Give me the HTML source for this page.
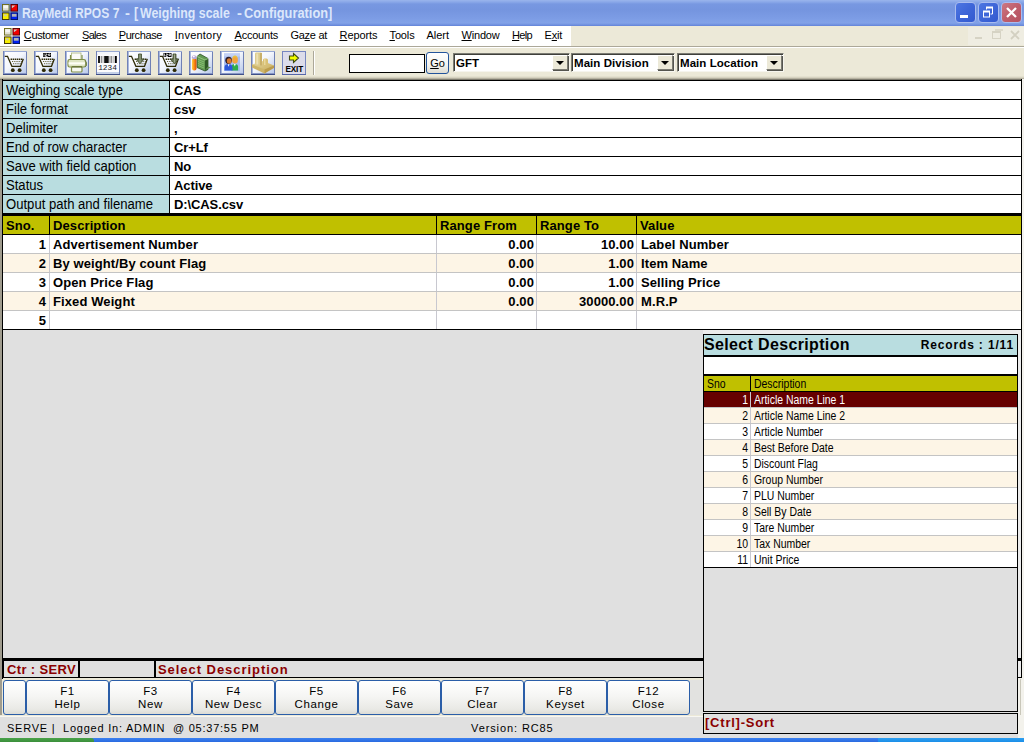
<!DOCTYPE html>
<html>
<head>
<meta charset="utf-8">
<title>RayMedi RPOS 7 - [Weighing scale - Configuration]</title>
<style>
*{box-sizing:border-box;margin:0;padding:0}
html,body{width:1024px;height:742px;overflow:hidden;background:#ECE9D8;font-family:"Liberation Sans",sans-serif;color:#000}
.a{position:absolute}
#root{position:relative;width:1024px;height:742px;overflow:hidden;background:#ECE9D8}
#title{left:0;top:0;width:1024px;height:26px;background:linear-gradient(to bottom,#9ab5ec 0px,#8aa8e8 2px,#7898e1 4px,#7595df 10px,#7b9be4 17px,#82a2e8 23px,#6f8fde 25px,#6182d8 26px)}
#title .tt{top:5px;font-size:14px;line-height:16px;font-weight:bold;color:#dce7fb;white-space:nowrap;transform-origin:0 0}
#title .txt{left:22px;top:6px;font-size:13px;line-height:15px;font-weight:bold;color:#dce7fb;letter-spacing:-.12px;white-space:nowrap}
.wb{top:2px;width:21px;height:21px;border-radius:4px;border:1px solid #a9bcef}
.mi{top:29px;font-size:11px;line-height:13px;white-space:nowrap}
.mi u{text-decoration:underline;text-underline-offset:1px}
.lab{left:3px;width:166px;height:18px;background:#b9dde0;font-size:14px;padding-left:3px;line-height:19px;white-space:nowrap;overflow:hidden}
.sx{display:inline-block;transform-origin:0 50%;white-space:nowrap}
.val{left:170px;width:851px;height:18px;background:#fff;font-size:13px;font-weight:bold;padding-left:4px;line-height:19px;white-space:nowrap;overflow:hidden;letter-spacing:-.1px}
.k{background:#000}
.gh{top:216px;height:18px;background:#c0c000;font-size:13px;font-weight:bold;line-height:20px;padding-left:3px;overflow:hidden;white-space:nowrap;letter-spacing:.1px}
.gr{left:3px;width:1018px;height:18px}
.gc{height:18px;top:0;font-size:13px;font-weight:bold;line-height:19px;white-space:nowrap;letter-spacing:.1px}
.lr{left:704px;width:313px;height:15px}
.lc{top:1px;height:15px;font-size:12px;line-height:15px;white-space:nowrap;transform-origin:0 0}
.fk{top:680px;height:35px;border:1px solid #2b5ea8;border-radius:3px;background:linear-gradient(to bottom,#ffffff 0%,#f6f6f4 45%,#e9e9e5 85%,#dcdcd6 100%);font-size:11.5px;text-align:center;line-height:13px;padding-top:4px;letter-spacing:.6px;white-space:nowrap}
.cb{top:53px;height:19px;background:#fff;border:1px solid;border-color:#7b7b73 #f6f5ee #f6f5ee #7b7b73;box-shadow:inset 1px 1px 0 #3f3f3a}
.cb .t{left:2px;top:3px;font-size:11.5px;line-height:13px;font-weight:bold;white-space:nowrap;letter-spacing:.05px}
.cb .d{right:1px;top:1px;width:16px;height:15px;background:#ECE9D8;border:1px solid;border-color:#fff #7b7b73 #7b7b73 #fff;box-shadow:1px 1px 0 #55554f}
.cb .d i{position:absolute;left:3px;top:5px;width:0;height:0;border-left:4px solid transparent;border-right:4px solid transparent;border-top:4px solid #000}
</style>
</head>
<body>
<div id="root">

<div id="title" class="a">
<svg class="a" style="left:2px;top:4px" width="16" height="16" viewBox="0 0 17 17">
<rect x="0.5" y="0.5" width="7" height="7" fill="#deded0" stroke="#6b6b1a"/>
<rect x="1.5" y="1.5" width="5" height="3" fill="#f6f6f2"/>
<rect x="9.5" y="0.5" width="7" height="7" fill="#f00000" stroke="#500"/>
<path d="M10.5 1.5h4l-4 3z" fill="#c8c8c8"/>
<rect x="0.5" y="9.5" width="7" height="7" fill="#f8f000" stroke="#3a3000"/>
<path d="M2 11h3v2h-3z" fill="#c8c8b0"/>
<rect x="9.5" y="9.5" width="7" height="7" fill="#0020f0" stroke="#001060"/>
<rect x="10.5" y="10.5" width="5" height="3" fill="#b4b4b4"/>
</svg>
<div class="a tt" style="left:22px;transform:scaleX(0.863)">RayMedi RPOS 7</div>
<div class="a tt" style="left:125.2px;transform:scaleX(1.05)">-</div>
<div class="a tt" style="left:133.6px;transform:scaleX(0.9)">[</div>
<div class="a tt" style="left:140px;transform:scaleX(0.883)">Weighing scale</div>
<div class="a tt" style="left:236.5px;transform:scaleX(1.05)">-</div>
<div class="a tt" style="left:243.9px;transform:scaleX(0.916)">Configuration]</div>
<div class="a wb" style="left:955px;background:linear-gradient(135deg,#4d76e2 0%,#3f67d9 45%,#3259cf 100%)"><div class="a" style="left:4px;top:12px;width:8px;height:3px;background:#fff"></div></div>
<div class="a wb" style="left:978px;background:linear-gradient(135deg,#4d76e2 0%,#3f67d9 45%,#3259cf 100%)"><svg class="a" style="left:3px;top:3px" width="13" height="13" viewBox="0 0 13 13"><path d="M4.500 3.500v-2h6v6.500h-2" fill="none" stroke="#fff" stroke-width="1"/><path d="M4 1.500h7" stroke="#fff" stroke-width="2"/><rect x="1.500" y="5.500" width="6" height="5.500" fill="none" stroke="#fff"/><path d="M1 5.500h7" stroke="#fff" stroke-width="2"/></svg></div>
<div class="a wb" style="left:1001px;background:linear-gradient(135deg,#cc7883 0%,#bf5e6c 50%,#b55261 100%)"><svg class="a" style="left:4px;top:4px" width="11" height="11" viewBox="0 0 11 11"><path d="M1 1L10 10M10 1L1 10" stroke="#fff" stroke-width="2.300"/></svg></div>
</div>
<div class="a" style="left:0;top:26px;width:1024px;height:20px;background:#ECE9D8"></div>
<div class="a" style="left:0;top:26px;width:571px;height:20px;background:#fff"></div>
<svg class="a" style="left:4px;top:28px" width="16" height="16" viewBox="0 0 17 17">
<rect x="0.5" y="0.5" width="7" height="7" fill="#deded0" stroke="#6b6b1a"/>
<rect x="1.5" y="1.5" width="5" height="3" fill="#f6f6f2"/>
<rect x="9.5" y="0.5" width="7" height="7" fill="#f00000" stroke="#500"/>
<path d="M10.5 1.5h4l-4 3z" fill="#c8c8c8"/>
<rect x="0.5" y="9.5" width="7" height="7" fill="#f8f000" stroke="#3a3000"/>
<path d="M2 11h3v2h-3z" fill="#c8c8b0"/>
<rect x="9.5" y="9.5" width="7" height="7" fill="#0020f0" stroke="#001060"/>
<rect x="10.5" y="10.5" width="5" height="3" fill="#b4b4b4"/>
</svg>
<div class="a mi" style="left:23.8px;letter-spacing:-0.34px"><u>C</u>ustomer</div>
<div class="a mi" style="left:82.0px;letter-spacing:-0.71px"><u>S</u>ales</div>
<div class="a mi" style="left:118.7px;letter-spacing:-0.40px"><u>P</u>urchase</div>
<div class="a mi" style="left:174.8px;letter-spacing:0.22px"><u>I</u>nventory</div>
<div class="a mi" style="left:234.5px;letter-spacing:-0.22px"><u>A</u>ccounts</div>
<div class="a mi" style="left:290.5px;letter-spacing:-0.29px">Ga<u>z</u>e at</div>
<div class="a mi" style="left:339.5px;letter-spacing:-0.08px"><u>R</u>eports</div>
<div class="a mi" style="left:389.5px;letter-spacing:-0.14px"><u>T</u>ools</div>
<div class="a mi" style="left:426.5px;letter-spacing:-0.02px">Alert</div>
<div class="a mi" style="left:461.5px;letter-spacing:-0.19px"><u>W</u>indow</div>
<div class="a mi" style="left:512.0px;letter-spacing:-0.66px"><u>H</u>elp</div>
<div class="a mi" style="left:544.5px;letter-spacing:-0.21px">E<u>x</u>it</div>
<div class="a" style="left:968px;top:27px;width:56px;height:18px;background:#efede2"></div>
<div class="a" style="left:975px;top:37px;width:7px;height:2px;background:#d6d3c4"></div>
<div class="a" style="left:992px;top:31px;width:9px;height:8px;border:1px solid #d6d3c4;border-top-width:2px"></div><div class="a" style="left:995px;top:29px;width:8px;height:2px;background:#dddacb"></div>
<svg class="a" style="left:1010px;top:30px" width="10" height="10" viewBox="0 0 10 10"><path d="M1 1L9 9M9 1L1 9" stroke="#d3d0c1" stroke-width="1.800"/></svg>
<div class="a" style="left:0;top:46px;width:1024px;height:1px;background:#aca899"></div>
<div class="a" style="left:0;top:47px;width:1024px;height:1px;background:#fff"></div>
<div class="a" style="left:0;top:48px;width:1024px;height:32px;background:#ECE9D8"></div><div class="a" style="left:0;top:76px;width:1024px;height:1px;background:#e4e1cf"></div><div class="a" style="left:0;top:77px;width:1024px;height:1px;background:#d6d2c0"></div><div class="a" style="left:0;top:78px;width:1024px;height:1px;background:#b6b2a1"></div>
<svg width="0" height="0" style="position:absolute"><defs>
<linearGradient id="ibg" x1="0" y1="0" x2="1" y2="1"><stop offset="0" stop-color="#ffffff"/><stop offset=".45" stop-color="#f4f7fd"/><stop offset="1" stop-color="#b9c9ea"/></linearGradient>
<linearGradient id="pill" x1="0" y1="0" x2="1" y2="0"><stop offset="0" stop-color="#ffcf40"/><stop offset=".5" stop-color="#fb8a14"/><stop offset="1" stop-color="#d84a08"/></linearGradient>
<linearGradient id="gold" x1="0" y1="0" x2="1" y2="1"><stop offset="0" stop-color="#e6d9a2"/><stop offset=".5" stop-color="#d6c07a"/><stop offset="1" stop-color="#c4a655"/></linearGradient>
<g id="bgx"><rect x="0" y="0" width="24" height="24" fill="#8393c4"/><rect x="1" y="1" width="22" height="22" fill="#a9b9de"/><rect x="2" y="1" width="21" height="21" fill="url(#ibg)"/><path d="M23.500 0v24" stroke="#6f80b5"/><path d="M0 0.500h24" stroke="#98a9d4"/><path d="M0.500 0v24" stroke="#7282b8"/><path d="M0 23.500h24" stroke="#3f4f88"/><path d="M1 22.500h22" stroke="#8797c6"/></g>
<g id="cart" fill="none" stroke="#2e2a06" stroke-width="1.300"><path d="M1.800 5.300h2.700l4.400 10h8.600l2.800 -7.200"/><path d="M7.600 8.200h12.600" stroke-dasharray="1.400 0.600" stroke-width="1.500"/><path d="M9 10.500h10M10 12.700h8.500" stroke="#6b6740" stroke-width="1" stroke-dasharray="1 0.800"/><circle cx="9.800" cy="19.200" r="1.900" fill="#2e2a06" stroke="none"/><circle cx="16.600" cy="19.200" r="1.900" fill="#2e2a06" stroke="none"/></g>
<g id="lbl"><rect x="0" y="0" width="8" height="4" fill="#000"/><path d="M1 0.500v3M2.500 1h1.500v1h-1.500v1.500h2M5.500 1h1.500v1.500h-1.500z" stroke="#fff" stroke-width=".7" fill="none"/></g>
<g id="darr"><path d="M-1.500 0h3v5h2.700l-4.200 4.800l-4.200 -4.800h2.700z" fill="#6c7858" stroke="#3f4a2c" stroke-width=".8"/><path d="M0 0.500v8" stroke="#a9b59a" stroke-width=".8"/></g>
</defs></svg>
<svg class="a" style="left:3px;top:51px" width="24" height="24" viewBox="0 0 24 24"><use href="#bgx"/><use href="#cart"/></svg>
<svg class="a" style="left:34px;top:51px" width="24" height="24" viewBox="0 0 24 24"><use href="#bgx"/><use href="#cart"/><use href="#lbl" x="9" y="2"/></svg>
<svg class="a" style="left:65px;top:51px" width="24" height="24" viewBox="0 0 24 24"><use href="#bgx"/><rect x="6.500" y="2" width="9.500" height="6.500" fill="#fbfbf8" stroke="#a7b378" stroke-width=".8"/>
<path d="M5.500 4v4M17 4v4" stroke="#7f8d48" stroke-width="1.200"/>
<rect x="3" y="8.500" width="17.500" height="7.500" rx="1.500" fill="#dfe5c4" stroke="#7f8d48" stroke-width="1.200"/>
<rect x="3.500" y="11.300" width="16.500" height="2.200" fill="#fdfdf6"/>
<path d="M20 9.500l1.500 2v3l-1.500 1.500" fill="#8a975a" stroke="#6d7a3f" stroke-width=".8"/>
<rect x="6.500" y="15.500" width="10.500" height="5.500" rx="1" fill="#f6f7ef" stroke="#7f8d48" stroke-width="1.200"/>
<path d="M7 16h10" stroke="#5f6b30" stroke-width="1.200"/></svg>
<svg class="a" style="left:96px;top:51px" width="24" height="24" viewBox="0 0 24 24"><use href="#bgx"/><rect x="1" y="1" width="22" height="2.500" fill="#f4f6fb"/><rect x="1" y="3.500" width="22" height="17.500" fill="#fbfbfd"/>
<path d="M3 5v7" stroke="#000" stroke-width="1.800"/><path d="M5.300 5v7" stroke="#777" stroke-width="1"/><path d="M7 5v7" stroke="#999" stroke-width=".8"/>
<rect x="8.200" y="5" width="4.500" height="7" fill="#111"/><path d="M14 5v7M15.600 5v7" stroke="#888" stroke-width="1"/><path d="M17.200 5v7" stroke="#aaa" stroke-width=".9"/><path d="M19.800 5v7" stroke="#000" stroke-width="2"/>
<text x="2.200" y="19.300" font-family="Liberation Mono" font-size="7.800" letter-spacing="0" fill="#202028">1234</text>
<rect x="1" y="21" width="22" height="2" fill="#c3cfe8"/></svg>
<svg class="a" style="left:127px;top:51px" width="24" height="24" viewBox="0 0 24 24"><use href="#bgx"/><use href="#cart"/><use href="#darr" x="13" y="3"/></svg>
<svg class="a" style="left:158px;top:51px" width="24" height="24" viewBox="0 0 24 24"><use href="#bgx"/><use href="#cart"/><use href="#darr" x="16.500" y="3"/><use href="#lbl" x="5.500" y="2"/></svg>
<svg class="a" style="left:189px;top:51px" width="24" height="24" viewBox="0 0 24 24"><use href="#bgx"/><path d="M8 5.500l3 -2.500l8 4.500v11l-3 1.500l-8 -3.500z" fill="#629a52" stroke="#2c5224" stroke-width=".8"/>
<path d="M16 9v11l3 -1.500v-11z" fill="#2f5a26"/><path d="M8 5.500l8 3.500l3 -1.500" fill="none" stroke="#9fd088" stroke-width=".8"/>
<path d="M9 8.500l6 2.500M9 10.500l6 2.500M9 12.500l6 2.500M9 14.500l6 2.500" stroke="#8fc57a" stroke-width=".8"/>
<path d="M16 19l6 -2.500l-3 -1z" fill="#5d8c4e"/>
<rect x="3" y="7" width="4.500" height="12.500" rx="2" fill="url(#pill)"/><ellipse cx="5.200" cy="6.200" rx="2.300" ry="2" fill="#b9a9d8"/><ellipse cx="4.800" cy="5.600" rx="1" ry=".8" fill="#fff"/></svg>
<svg class="a" style="left:220px;top:51px" width="24" height="24" viewBox="0 0 24 24"><use href="#bgx"/><rect x="4" y="2.500" width="16" height="17.500" fill="#a9bdf0"/><rect x="4" y="2.500" width="16" height="3" fill="#c3d1f5"/>
<path d="M11.500 19.500v-3.500q0 -3 3.300 -3t3.300 3v3.500z" fill="#2fae4c"/><path d="M13.800 13l1 2.500l1 -2.500z" fill="#fff"/>
<ellipse cx="15" cy="9" rx="2.900" ry="3.600" fill="#f3a43c"/><path d="M12.200 8q.3 -3.500 2.800 -3.500t2.800 3.500q-1 -2 -2.800 -2t-2.800 2z" fill="#e9c33a"/>
<path d="M4.500 19.500v-3q0 -3.500 4 -3.500t4 3.500v3z" fill="#2d58d8"/><path d="M7.700 13.200l.9 2.500l.9 -2.500z" fill="#fff"/>
<ellipse cx="8.600" cy="9.300" rx="3.300" ry="3.600" fill="#2b1c28"/><ellipse cx="9.200" cy="10" rx="2.400" ry="2.700" fill="#d8782c"/></svg>
<svg class="a" style="left:251px;top:51px" width="24" height="24" viewBox="0 0 24 24"><use href="#bgx"/><path d="M1 13.500l11 -3.500l11 4.500l-9.500 8z" fill="url(#gold)"/><path d="M1 13.500l12.500 5v4l-12.500 -6z" fill="#cdb56a"/><path d="M13.500 18.500l9.500 -4v2.500l-9.500 5.500z" fill="#bb9c4c"/>
<rect x="4" y="1.500" width="7" height="13" rx="1.200" fill="#dccb8c"/><rect x="5.300" y="2.500" width="2" height="11" fill="#ece0b4"/><rect x="9" y="2" width="2" height="12.500" fill="#c9b06a"/>
<rect x="12" y="7.500" width="5" height="7" rx="1.500" fill="#d9c075"/><rect x="13" y="8" width="1.500" height="6" fill="#e9d89c"/></svg>
<svg class="a" style="left:282px;top:51px" width="24" height="24" viewBox="0 0 24 24"><rect x="0" y="0" width="24" height="24" fill="#7686c0"/><rect x="1" y="1" width="22" height="22" fill="#dcdcea"/><path d="M0 23.500h24" stroke="#5565a8"/>
<path d="M7.500 5h4v-2.500l5 4.500l-5 4.500v-2.500h-4z" fill="#f2ff00" stroke="#3d4a10" stroke-width="1.100"/>
<text x="3.600" y="20.800" font-family="Liberation Sans" font-weight="bold" font-size="8.200" letter-spacing="-.2" fill="#000">EXIT</text></svg>
<div class="a" style="left:313px;top:51px;width:1px;height:24px;background:#aca899"></div><div class="a" style="left:314px;top:51px;width:1px;height:24px;background:#fff"></div>
<div class="a" style="left:349px;top:54px;width:76px;height:19px;background:#fff;border:1px solid #000"></div>
<div class="a" style="left:426px;top:52px;width:23px;height:22px;border:1px solid #23549b;border-radius:3px;background:linear-gradient(to bottom,#fff,#f3f3ef 60%,#dddcd3);font-size:11px;line-height:13px;padding-top:4px;text-align:center"><u>G</u>o</div>
<div class="a cb" style="left:453px;width:117px"><div class="a t">GFT</div><div class="a d"><i></i></div></div>
<div class="a cb" style="left:571px;width:104px"><div class="a t">Main Division</div><div class="a d"><i></i></div></div>
<div class="a cb" style="left:677px;width:107px"><div class="a t">Main Location</div><div class="a d"><i></i></div></div>
<div class="a" style="left:0;top:79px;width:2px;height:636px;background:#a09c8e"></div>
<div class="a" style="left:0;top:79px;width:1024px;height:1px;background:#7e7b6f"></div><div class="a k" style="left:2px;top:80px;width:1020px;height:1px"></div>
<div class="a k" style="left:2px;top:79px;width:1px;height:600px"></div>
<div class="a k" style="left:1021px;top:79px;width:1px;height:599px"></div>
<div class="a" style="left:1022px;top:79px;width:2px;height:640px;background:#f4f3ee"></div>
<div class="a lab" style="top:81px"><span class="sx" style="transform:scaleX(.935)">Weighing scale type</span></div><div class="a k" style="left:169px;top:81px;width:1px;height:18px"></div><div class="a val" style="top:81px">CAS</div>
<div class="a k" style="left:3px;top:99px;width:1018px;height:1px"></div>
<div class="a lab" style="top:100px"><span class="sx" style="transform:scaleX(.935)">File format</span></div><div class="a k" style="left:169px;top:100px;width:1px;height:18px"></div><div class="a val" style="top:100px">csv</div>
<div class="a k" style="left:3px;top:118px;width:1018px;height:1px"></div>
<div class="a lab" style="top:119px"><span class="sx" style="transform:scaleX(.935)">Delimiter</span></div><div class="a k" style="left:169px;top:119px;width:1px;height:18px"></div><div class="a val" style="top:119px">,</div>
<div class="a k" style="left:3px;top:137px;width:1018px;height:1px"></div>
<div class="a lab" style="top:138px"><span class="sx" style="transform:scaleX(.935)">End of row character</span></div><div class="a k" style="left:169px;top:138px;width:1px;height:18px"></div><div class="a val" style="top:138px">Cr+Lf</div>
<div class="a k" style="left:3px;top:156px;width:1018px;height:1px"></div>
<div class="a lab" style="top:157px"><span class="sx" style="transform:scaleX(.935)">Save with field caption</span></div><div class="a k" style="left:169px;top:157px;width:1px;height:18px"></div><div class="a val" style="top:157px">No</div>
<div class="a k" style="left:3px;top:175px;width:1018px;height:1px"></div>
<div class="a lab" style="top:176px"><span class="sx" style="transform:scaleX(.935)">Status</span></div><div class="a k" style="left:169px;top:176px;width:1px;height:18px"></div><div class="a val" style="top:176px">Active</div>
<div class="a k" style="left:3px;top:194px;width:1018px;height:1px"></div>
<div class="a lab" style="top:195px"><span class="sx" style="transform:scaleX(.935)">Output path and filename</span></div><div class="a k" style="left:169px;top:195px;width:1px;height:18px"></div><div class="a val" style="top:195px">D:\CAS.csv</div>
<div class="a k" style="left:3px;top:213px;width:1018px;height:3px"></div>
<div class="a gh" style="left:3px;width:46px">Sno.</div>
<div class="a gh" style="left:50px;width:386px">Description</div>
<div class="a gh" style="left:437px;width:99px">Range From</div>
<div class="a gh" style="left:537px;width:99px">Range To</div>
<div class="a gh" style="left:637px;width:384px">Value</div>
<div class="a k" style="left:49px;top:216px;width:1px;height:18px"></div>
<div class="a k" style="left:436px;top:216px;width:1px;height:18px"></div>
<div class="a k" style="left:536px;top:216px;width:1px;height:18px"></div>
<div class="a k" style="left:636px;top:216px;width:1px;height:18px"></div>
<div class="a k" style="left:3px;top:234px;width:1018px;height:1px"></div>
<div class="a gr" style="top:235px;background:#fff">
<div class="a gc" style="left:0;width:43px;text-align:right">1</div>
<div class="a gc" style="left:50px">Advertisement Number</div>
<div class="a gc" style="left:434px;width:97px;text-align:right">0.00</div>
<div class="a gc" style="left:534px;width:97px;text-align:right">10.00</div>
<div class="a gc" style="left:638px">Label Number</div>
<div class="a" style="left:46px;top:0;width:1px;height:19px;background:#c8c8d0"></div>
<div class="a" style="left:433px;top:0;width:1px;height:19px;background:#c8c8d0"></div>
<div class="a" style="left:533px;top:0;width:1px;height:19px;background:#c8c8d0"></div>
<div class="a" style="left:633px;top:0;width:1px;height:19px;background:#c8c8d0"></div>
</div>
<div class="a" style="left:3px;top:253px;width:1018px;height:1px;background:#c4c4c4"></div>
<div class="a gr" style="top:254px;background:#fdf5e6">
<div class="a gc" style="left:0;width:43px;text-align:right">2</div>
<div class="a gc" style="left:50px">By weight/By count Flag</div>
<div class="a gc" style="left:434px;width:97px;text-align:right">0.00</div>
<div class="a gc" style="left:534px;width:97px;text-align:right">1.00</div>
<div class="a gc" style="left:638px">Item Name</div>
<div class="a" style="left:46px;top:0;width:1px;height:19px;background:#c8c8d0"></div>
<div class="a" style="left:433px;top:0;width:1px;height:19px;background:#c8c8d0"></div>
<div class="a" style="left:533px;top:0;width:1px;height:19px;background:#c8c8d0"></div>
<div class="a" style="left:633px;top:0;width:1px;height:19px;background:#c8c8d0"></div>
</div>
<div class="a" style="left:3px;top:272px;width:1018px;height:1px;background:#c4c4c4"></div>
<div class="a gr" style="top:273px;background:#fff">
<div class="a gc" style="left:0;width:43px;text-align:right">3</div>
<div class="a gc" style="left:50px">Open Price Flag</div>
<div class="a gc" style="left:434px;width:97px;text-align:right">0.00</div>
<div class="a gc" style="left:534px;width:97px;text-align:right">1.00</div>
<div class="a gc" style="left:638px">Selling Price</div>
<div class="a" style="left:46px;top:0;width:1px;height:19px;background:#c8c8d0"></div>
<div class="a" style="left:433px;top:0;width:1px;height:19px;background:#c8c8d0"></div>
<div class="a" style="left:533px;top:0;width:1px;height:19px;background:#c8c8d0"></div>
<div class="a" style="left:633px;top:0;width:1px;height:19px;background:#c8c8d0"></div>
</div>
<div class="a" style="left:3px;top:291px;width:1018px;height:1px;background:#c4c4c4"></div>
<div class="a gr" style="top:292px;background:#fdf5e6">
<div class="a gc" style="left:0;width:43px;text-align:right">4</div>
<div class="a gc" style="left:50px">Fixed Weight</div>
<div class="a gc" style="left:434px;width:97px;text-align:right">0.00</div>
<div class="a gc" style="left:534px;width:97px;text-align:right">30000.00</div>
<div class="a gc" style="left:638px">M.R.P</div>
<div class="a" style="left:46px;top:0;width:1px;height:19px;background:#c8c8d0"></div>
<div class="a" style="left:433px;top:0;width:1px;height:19px;background:#c8c8d0"></div>
<div class="a" style="left:533px;top:0;width:1px;height:19px;background:#c8c8d0"></div>
<div class="a" style="left:633px;top:0;width:1px;height:19px;background:#c8c8d0"></div>
</div>
<div class="a" style="left:3px;top:310px;width:1018px;height:1px;background:#c4c4c4"></div>
<div class="a gr" style="top:311px;background:#fff">
<div class="a gc" style="left:0;width:43px;text-align:right">5</div>
<div class="a gc" style="left:50px"></div>
<div class="a gc" style="left:434px;width:97px;text-align:right"></div>
<div class="a gc" style="left:534px;width:97px;text-align:right"></div>
<div class="a gc" style="left:638px"></div>
<div class="a" style="left:46px;top:0;width:1px;height:19px;background:#c8c8d0"></div>
<div class="a" style="left:433px;top:0;width:1px;height:19px;background:#c8c8d0"></div>
<div class="a" style="left:533px;top:0;width:1px;height:19px;background:#c8c8d0"></div>
<div class="a" style="left:633px;top:0;width:1px;height:19px;background:#c8c8d0"></div>
</div>
<div class="a k" style="left:3px;top:329px;width:1019px;height:1px"></div>
<div class="a" style="left:3px;top:330px;width:1018px;height:328px;background:#e0e0e0"></div>
<div class="a k" style="left:2px;top:658px;width:1020px;height:3px"></div>
<div class="a" style="left:4px;top:661px;width:1017px;height:16px;background:#e0e0e0"></div>
<div class="a k" style="left:2px;top:661px;width:2px;height:17px"></div>
<div class="a k" style="left:2px;top:677px;width:1020px;height:1px"></div>
<div class="a k" style="left:78px;top:660px;width:2px;height:17px"></div>
<div class="a k" style="left:154px;top:660px;width:2px;height:17px"></div>
<div class="a" style="left:7px;top:662px;font-size:13px;line-height:16px;font-weight:bold;color:#8b0000;letter-spacing:.35px;white-space:nowrap">Ctr : SERV</div>
<div class="a" style="left:158px;top:662px;font-size:13px;line-height:16px;font-weight:bold;color:#8b0000;letter-spacing:.95px;white-space:nowrap">Select Description</div>
<div class="a fk" style="left:3px;width:23px"></div>
<div class="a fk" style="left:26px;width:83px">F1<br>Help</div>
<div class="a fk" style="left:109px;width:83px">F3<br>New</div>
<div class="a fk" style="left:192px;width:83px">F4<br>New Desc</div>
<div class="a fk" style="left:275px;width:83px">F5<br>Change</div>
<div class="a fk" style="left:358px;width:83px">F6<br>Save</div>
<div class="a fk" style="left:441px;width:83px">F7<br>Clear</div>
<div class="a fk" style="left:524px;width:83px">F8<br>Keyset</div>
<div class="a fk" style="left:607px;width:83px">F12<br>Close</div>
<div class="a" style="left:690px;top:680px;width:13px;height:35px;background:#e2e2e0"></div>
<div class="a" style="left:0;top:717px;width:1024px;height:21px;background:#e0e0e0"></div>
<div class="a" style="left:0;top:716px;width:1024px;height:1px;background:#f8f7f2"></div>
<div class="a" style="left:7px;top:722px;font-size:11px;line-height:13px;letter-spacing:.77px;white-space:pre">SERVE |  Logged In: ADMIN  @ 05:37:55 PM</div>
<div class="a" style="left:471px;top:722px;font-size:11px;line-height:13px;letter-spacing:.9px;white-space:pre">Version: RC85</div>
<div class="a" style="left:0;top:738px;width:1024px;height:4px;background:linear-gradient(to bottom,#3c81f0,#2a6ae0)"></div>
<div class="a" style="left:0;top:738px;width:94px;height:4px;background:linear-gradient(to bottom,#4aa34a,#3b8f3b);border-radius:0 3px 0 0"></div>
<div class="a" style="left:878px;top:738px;width:146px;height:4px;background:linear-gradient(to bottom,#2fa0f0,#1a8ee8)"></div>
<div class="a" style="left:703px;top:330px;width:318px;height:408px;background:#e0e0e0"></div>
<div class="a" style="left:703px;top:330px;width:318px;height:5px;background:#ececec"></div>
<div class="a" style="left:1018px;top:330px;width:3px;height:328px;background:#ececec"></div><div class="a" style="left:1018px;top:661px;width:3px;height:16px;background:#ececec"></div><div class="a k" style="left:1018px;top:658px;width:4px;height:3px"></div><div class="a k" style="left:1018px;top:677px;width:4px;height:1px"></div><div class="a" style="left:1018px;top:678px;width:6px;height:60px;background:#f3f2ec"></div><div class="a" style="left:1020px;top:679px;width:1px;height:36px;background:#c9c7ba"></div>
<div class="a k" style="left:703px;top:334px;width:1px;height:378px"></div>
<div class="a k" style="left:1017px;top:334px;width:1px;height:378px"></div>
<div class="a k" style="left:703px;top:334px;width:315px;height:1px"></div>
<div class="a" style="left:704px;top:335px;width:313px;height:20px;background:#b9dde0"></div>
<div class="a" style="left:704px;top:335px;font-size:16px;line-height:20px;font-weight:bold;letter-spacing:.35px;white-space:nowrap">Select Description</div>
<div class="a" style="left:904px;width:110px;text-align:right;top:339px;font-size:12px;line-height:13px;font-weight:bold;letter-spacing:.85px;white-space:nowrap">Records : 1/11</div>
<div class="a k" style="left:703px;top:355px;width:315px;height:2px"></div>
<div class="a" style="left:704px;top:357px;width:313px;height:17px;background:#fff"></div>
<div class="a k" style="left:703px;top:374px;width:315px;height:2px"></div>
<div class="a" style="left:704px;top:376px;width:313px;height:15px;background:#c0c000"></div>
<div class="a k" style="left:750px;top:376px;width:1px;height:15px"></div>
<div class="a k" style="left:704px;top:391px;width:313px;height:1px"></div>
<div class="a lc" style="left:707px;top:377px;transform:scaleX(.87)">Sno</div>
<div class="a lc" style="left:754px;top:377px;transform:scaleX(.87)">Description</div>
<div class="a lr" style="top:392px;background:#660000;color:#fff"><div class="a lc" style="left:16px;width:28px;text-align:right;transform:scaleX(.87);transform-origin:100% 0">1</div><div class="a lc" style="left:50px;transform:scaleX(.87)">Article Name Line 1</div><div class="a" style="left:46px;top:0;width:1px;height:16px;background:#c8c8d0"></div></div>
<div class="a" style="left:704px;top:407px;width:313px;height:1px;background:#c4c4c4"></div>
<div class="a lr" style="top:408px;background:#fdf5e6;color:#000"><div class="a lc" style="left:16px;width:28px;text-align:right;transform:scaleX(.87);transform-origin:100% 0">2</div><div class="a lc" style="left:50px;transform:scaleX(.87)">Article Name Line 2</div><div class="a" style="left:46px;top:0;width:1px;height:16px;background:#c8c8d0"></div></div>
<div class="a" style="left:704px;top:423px;width:313px;height:1px;background:#c4c4c4"></div>
<div class="a lr" style="top:424px;background:#fff;color:#000"><div class="a lc" style="left:16px;width:28px;text-align:right;transform:scaleX(.87);transform-origin:100% 0">3</div><div class="a lc" style="left:50px;transform:scaleX(.87)">Article Number</div><div class="a" style="left:46px;top:0;width:1px;height:16px;background:#c8c8d0"></div></div>
<div class="a" style="left:704px;top:439px;width:313px;height:1px;background:#c4c4c4"></div>
<div class="a lr" style="top:440px;background:#fdf5e6;color:#000"><div class="a lc" style="left:16px;width:28px;text-align:right;transform:scaleX(.87);transform-origin:100% 0">4</div><div class="a lc" style="left:50px;transform:scaleX(.87)">Best Before Date</div><div class="a" style="left:46px;top:0;width:1px;height:16px;background:#c8c8d0"></div></div>
<div class="a" style="left:704px;top:455px;width:313px;height:1px;background:#c4c4c4"></div>
<div class="a lr" style="top:456px;background:#fff;color:#000"><div class="a lc" style="left:16px;width:28px;text-align:right;transform:scaleX(.87);transform-origin:100% 0">5</div><div class="a lc" style="left:50px;transform:scaleX(.87)">Discount Flag</div><div class="a" style="left:46px;top:0;width:1px;height:16px;background:#c8c8d0"></div></div>
<div class="a" style="left:704px;top:471px;width:313px;height:1px;background:#c4c4c4"></div>
<div class="a lr" style="top:472px;background:#fdf5e6;color:#000"><div class="a lc" style="left:16px;width:28px;text-align:right;transform:scaleX(.87);transform-origin:100% 0">6</div><div class="a lc" style="left:50px;transform:scaleX(.87)">Group Number</div><div class="a" style="left:46px;top:0;width:1px;height:16px;background:#c8c8d0"></div></div>
<div class="a" style="left:704px;top:487px;width:313px;height:1px;background:#c4c4c4"></div>
<div class="a lr" style="top:488px;background:#fff;color:#000"><div class="a lc" style="left:16px;width:28px;text-align:right;transform:scaleX(.87);transform-origin:100% 0">7</div><div class="a lc" style="left:50px;transform:scaleX(.87)">PLU Number</div><div class="a" style="left:46px;top:0;width:1px;height:16px;background:#c8c8d0"></div></div>
<div class="a" style="left:704px;top:503px;width:313px;height:1px;background:#c4c4c4"></div>
<div class="a lr" style="top:504px;background:#fdf5e6;color:#000"><div class="a lc" style="left:16px;width:28px;text-align:right;transform:scaleX(.87);transform-origin:100% 0">8</div><div class="a lc" style="left:50px;transform:scaleX(.87)">Sell By Date</div><div class="a" style="left:46px;top:0;width:1px;height:16px;background:#c8c8d0"></div></div>
<div class="a" style="left:704px;top:519px;width:313px;height:1px;background:#c4c4c4"></div>
<div class="a lr" style="top:520px;background:#fff;color:#000"><div class="a lc" style="left:16px;width:28px;text-align:right;transform:scaleX(.87);transform-origin:100% 0">9</div><div class="a lc" style="left:50px;transform:scaleX(.87)">Tare Number</div><div class="a" style="left:46px;top:0;width:1px;height:16px;background:#c8c8d0"></div></div>
<div class="a" style="left:704px;top:535px;width:313px;height:1px;background:#c4c4c4"></div>
<div class="a lr" style="top:536px;background:#fdf5e6;color:#000"><div class="a lc" style="left:16px;width:28px;text-align:right;transform:scaleX(.87);transform-origin:100% 0">10</div><div class="a lc" style="left:50px;transform:scaleX(.87)">Tax Number</div><div class="a" style="left:46px;top:0;width:1px;height:16px;background:#c8c8d0"></div></div>
<div class="a" style="left:704px;top:551px;width:313px;height:1px;background:#c4c4c4"></div>
<div class="a lr" style="top:552px;background:#fff;color:#000"><div class="a lc" style="left:16px;width:28px;text-align:right;transform:scaleX(.87);transform-origin:100% 0">11</div><div class="a lc" style="left:50px;transform:scaleX(.87)">Unit Price</div><div class="a" style="left:46px;top:0;width:1px;height:16px;background:#c8c8d0"></div></div>
<div class="a k" style="left:704px;top:567px;width:313px;height:1px"></div>
<div class="a k" style="left:703px;top:711px;width:315px;height:1px"></div>
<div class="a" style="left:703px;top:713px;width:315px;height:21px;border:1px solid #000;background:#e0e0e0"></div>
<div class="a" style="left:705px;top:715px;font-size:13px;line-height:15px;font-weight:bold;color:#8b0000;letter-spacing:.78px;white-space:nowrap">[Ctrl]-Sort</div>

</div>
</body>
</html>
